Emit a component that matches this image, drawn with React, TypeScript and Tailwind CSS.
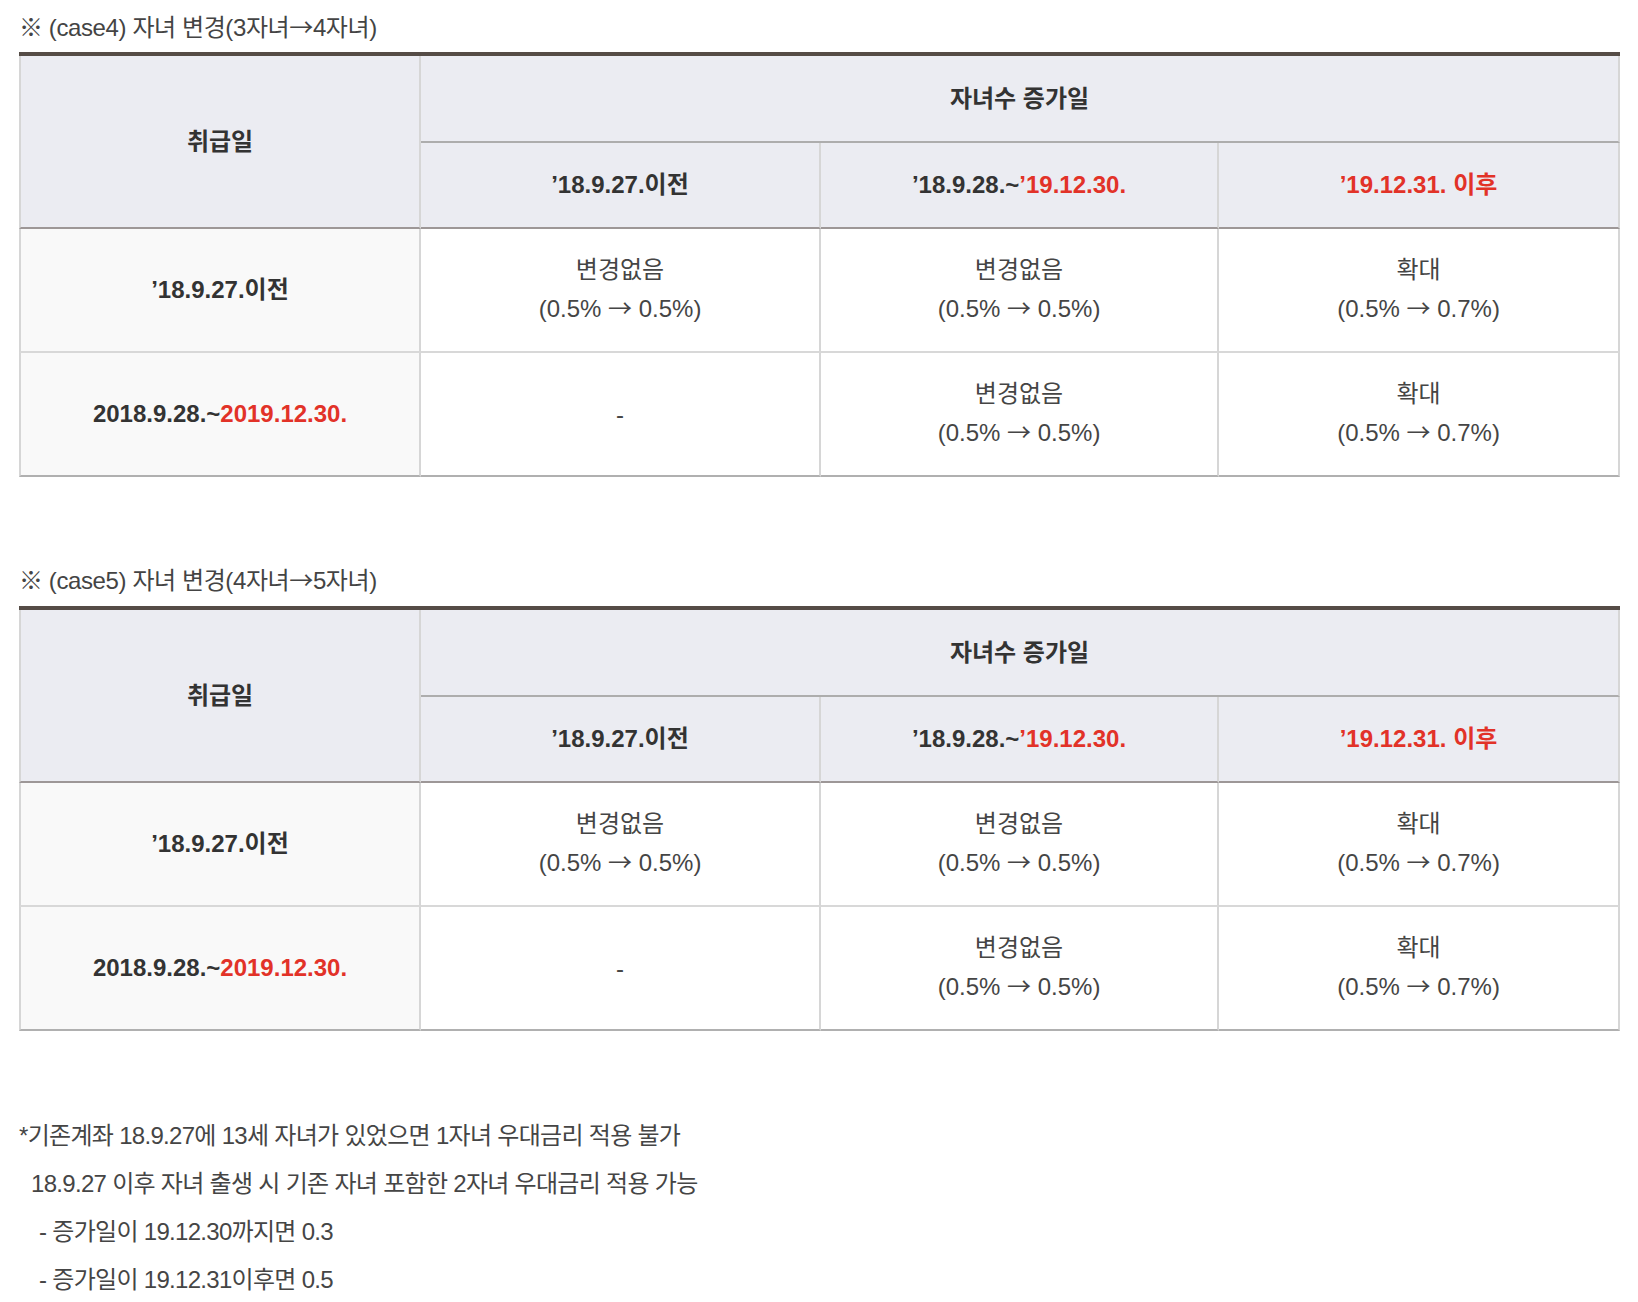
import React from "react";

const RED = "text-[#e23228]";

function Arrow() {
  return <span className="font-['Noto_Sans_CJK_KR',sans-serif]">→</span>;
}

function Cell2({ a, from, to }: { a: string; from: string; to: string }) {
  return (
    <div className="flex flex-col items-center pb-[4px]">
      <span className="pt-[4px] leading-[35px]">{a}</span>
      <span>
        ({from} <Arrow /> {to})
      </span>
    </div>
  );
}

function CaseTable({
  from,
  to,
  n,
  gap,
}: {
  from: string;
  to: string;
  n: string;
  gap: string;
}) {
  const thBase = "bg-[#ebecf2] font-bold text-[#333] text-[24px] p-0 align-middle text-center";
  const tdBody =
    "p-0 align-middle text-center text-[24px] text-[#454545] font-normal leading-[39px] border-r-2 border-r-[#d6d6d6] h-[124px]";
  return (
    <section>
      <div className="h-[36px] leading-[36px] text-[24px] text-[#444] tracking-[-0.4px]">
        ※ ({n}) 자녀 변경({from}
        <Arrow />
        {to})
      </div>
      <table
        className={`${gap} w-[1601px] table-fixed border-separate border-spacing-0 border-t-4 border-t-[#554c46]`}
      >
        <colgroup>
          <col className="w-[402px]" />
          <col className="w-[400px]" />
          <col className="w-[398px]" />
          <col className="w-[401px]" />
        </colgroup>
        <thead>
          <tr>
            <th
              rowSpan={2}
              className={`${thBase} border-l-2 border-l-[#d6d6d6] border-r-2 border-r-[#d6d6d6] border-b-2 border-b-[#9d9797]`}
            >
              취급일
            </th>
            <th
              colSpan={3}
              className={`${thBase} h-[87px] border-r-2 border-r-[#d6d6d6] border-b-2 border-b-[#adadad]`}
            >
              자녀수 증가일
            </th>
          </tr>
          <tr>
            <th className={`${thBase} h-[86px] border-r-2 border-r-[#d6d6d6] border-b-2 border-b-[#9d9797]`}>
              ’18.9.27.이전
            </th>
            <th className={`${thBase} h-[86px] border-r-2 border-r-[#d6d6d6] border-b-2 border-b-[#9d9797]`}>
              ’18.9.28.~<span className={RED}>’19.12.30.</span>
            </th>
            <th className={`${thBase} h-[86px] border-r-2 border-r-[#d6d6d6] border-b-2 border-b-[#9d9797]`}>
              <span className={RED}>’19.12.31. 이후</span>
            </th>
          </tr>
        </thead>
        <tbody>
          <tr>
            <td className="p-0 h-[124px] align-middle text-center bg-[#f9f9f9] font-bold text-[#333] text-[24px] border-l-2 border-l-[#d6d6d6] border-r-2 border-r-[#d6d6d6] border-b-2 border-b-[#d8d8d8]">
              ’18.9.27.이전
            </td>
            <td className={`${tdBody} border-b-2 border-b-[#d8d8d8]`}>
              <Cell2 a="변경없음" from="0.5%" to="0.5%" />
            </td>
            <td className={`${tdBody} border-b-2 border-b-[#d8d8d8]`}>
              <Cell2 a="변경없음" from="0.5%" to="0.5%" />
            </td>
            <td className={`${tdBody} border-b-2 border-b-[#d8d8d8]`}>
              <Cell2 a="확대" from="0.5%" to="0.7%" />
            </td>
          </tr>
          <tr>
            <td className="p-0 h-[124px] align-middle text-center bg-[#f9f9f9] font-bold text-[#333] text-[24px] border-l-2 border-l-[#d6d6d6] border-r-2 border-r-[#d6d6d6] border-b-2 border-b-[#b0b0b0]">
              2018.9.28.~<span className={RED}>2019.12.30.</span>
            </td>
            <td className={`${tdBody} border-b-2 border-b-[#b0b0b0]`}>-</td>
            <td className={`${tdBody} border-b-2 border-b-[#b0b0b0]`}>
              <Cell2 a="변경없음" from="0.5%" to="0.5%" />
            </td>
            <td className={`${tdBody} border-b-2 border-b-[#b0b0b0]`}>
              <Cell2 a="확대" from="0.5%" to="0.7%" />
            </td>
          </tr>
        </tbody>
      </table>
    </section>
  );
}

export default function App() {
  return (
    <div className="min-h-[1302px] w-[1638px] bg-white font-['Liberation_Sans','Noto_Sans_CJK_KR',sans-serif] pl-[19px] pt-[8px]">
      <CaseTable n="case4" from="3자녀" to="4자녀" gap="mt-[8px]" />
      <div className="mt-[84px]">
        <CaseTable n="case5" from="4자녀" to="5자녀" gap="mt-[9px]" />
      </div>
      <div className="mt-[81px] text-[24px] leading-[48px] text-[#454545] tracking-[-0.7px]">
        <div>*기존계좌 18.9.27에 13세 자녀가 있었으면 1자녀 우대금리 적용 불가</div>
        <div className="pl-[12px]">18.9.27 이후 자녀 출생 시 기존 자녀 포함한 2자녀 우대금리 적용 가능</div>
        <div className="pl-[20px]">- 증가일이 19.12.30까지면 0.3</div>
        <div className="pl-[20px]">- 증가일이 19.12.31이후면 0.5</div>
      </div>
    </div>
  );
}
